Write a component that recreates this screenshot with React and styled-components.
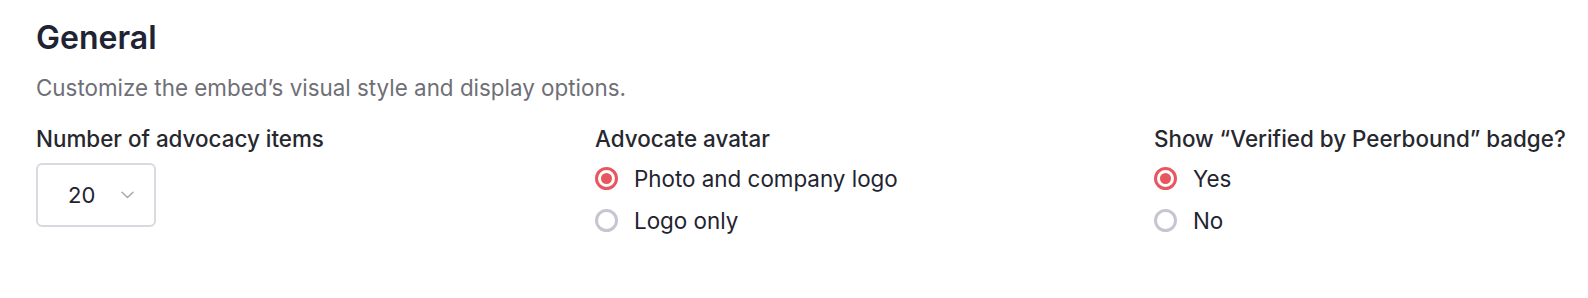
import styled, { createGlobalStyle } from "styled-components";

const GlobalStyle = createGlobalStyle`
  body {
    margin: 0;
    background: #ffffff;
    font-family: Inter, "Noto Sans", sans-serif;
    -webkit-font-smoothing: antialiased;
  }
`;

const Page = styled.div`
  padding: 19px 36px 40px;
`;

const Title = styled.h2`
  margin: 0;
  font-size: 32px;
  line-height: 38px;
  font-weight: 600;
  color: #1e2433;
`;

const Subtitle = styled.p`
  margin: 16px 0 0;
  font-size: 22.4px;
  line-height: 30px;
  color: #6f6f78;
`;

const Fields = styled.div`
  display: grid;
  grid-template-columns: 559px 559px 1fr;
  margin-top: 21px;
`;

const Field = styled.div`
  display: flex;
  flex-direction: column;
  align-items: flex-start;
  gap: 9px;
`;

const FieldLabel = styled.div`
  font-size: 22.4px;
  line-height: 30px;
  font-weight: 500;
  color: #27272f;
  white-space: nowrap;
`;

const SelectBox = styled.div`
  box-sizing: border-box;
  width: 120px;
  height: 64px;
  border: 2px solid #d9d9df;
  border-radius: 6px;
  display: flex;
  align-items: center;
  padding: 0 21px 0 30px;
  gap: 26px;
  font-size: 22px;
  color: #1f2430;
`;

const Chevron = styled.svg`
  width: 13px;
  height: 8px;
  flex: none;
`;

const RadioList = styled.div`
  display: flex;
  flex-direction: column;
  gap: 12px;
`;

const RadioRow = styled.label`
  display: flex;
  align-items: center;
  gap: 16px;
  height: 30px;
  font-size: 22.4px;
  color: #1f2430;
  cursor: pointer;
`;

const RadioDot = styled.span`
  box-sizing: border-box;
  width: 23px;
  height: 23px;
  border-radius: 50%;
  border: 3px solid ${(p) => (p.$checked ? "#e8575e" : "#c6c6d2")};
  display: flex;
  align-items: center;
  justify-content: center;
  flex: none;

  &::after {
    content: "";
    width: 11px;
    height: 11px;
    border-radius: 50%;
    background: #e8575e;
    display: ${(p) => (p.$checked ? "block" : "none")};
  }
`;

function Radio({ checked, children }) {
  return (
    <RadioRow>
      <RadioDot $checked={checked} />
      {children}
    </RadioRow>
  );
}

export default function App() {
  return (
    <>
      <GlobalStyle />
      <Page>
        <Title>General</Title>
        <Subtitle>Customize the embed’s visual style and display options.</Subtitle>
        <Fields>
          <Field>
            <FieldLabel>Number of advocacy items</FieldLabel>
            <SelectBox>
              20
              <Chevron viewBox="0 0 13 8" fill="none">
                <path d="M1 1.2l5.5 5.3L12 1.2" stroke="#a5a5ad" strokeWidth="1.4" strokeLinecap="round" strokeLinejoin="round" />
              </Chevron>
            </SelectBox>
          </Field>
          <Field>
            <FieldLabel>Advocate avatar</FieldLabel>
            <RadioList>
              <Radio checked>Photo and company logo</Radio>
              <Radio>Logo only</Radio>
            </RadioList>
          </Field>
          <Field>
            <FieldLabel>Show “Verified by Peerbound” badge?</FieldLabel>
            <RadioList>
              <Radio checked>Yes</Radio>
              <Radio>No</Radio>
            </RadioList>
          </Field>
        </Fields>
      </Page>
    </>
  );
}
